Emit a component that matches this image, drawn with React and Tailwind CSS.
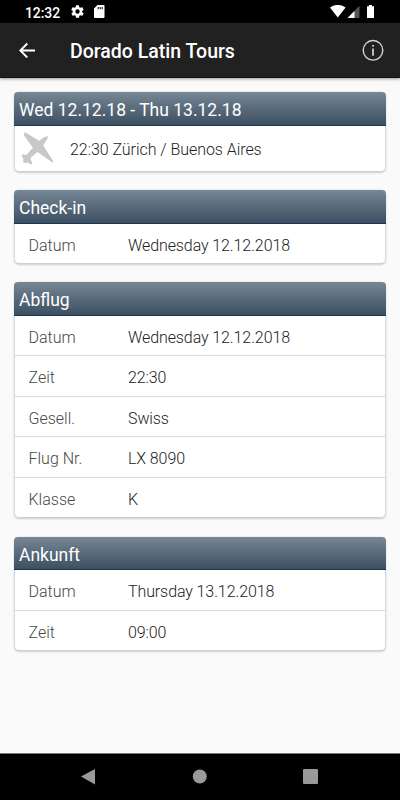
const rowText = "text-[16px] leading-none font-light whitespace-nowrap";

function Header({ children }) {
  return (
    <div className="-mx-px flex h-[33.5px] items-center rounded-t border-b border-[#173550] bg-linear-to-b from-[#778796] to-[#3c5061] px-[5px] text-[17.5px] leading-none text-white">
      <span className="pt-[5px]">{children}</span>
    </div>
  );
}

function Card({ title, rows, children, className = "" }) {
  return (
    <section className={`mx-[15px] rounded bg-white shadow-[0_1px_2px_1px_rgba(0,0,0,0.18)] ${className}`}>
      <Header>{title}</Header>
      {children}
      {rows && (
        <div className="divide-y divide-[#dadada]">
          {rows.map(([label, value]) => (
            <div key={label} className={`flex h-[40.5px] items-center pt-[5px] pl-[13.5px] last:h-[39.5px] ${rowText}`}>
              <span className="w-[99.5px] text-[#484848]">{label}</span>
              <span className="tracking-[-0.1px] text-[#222]">{value}</span>
            </div>
          ))}
        </div>
      )}
    </section>
  );
}

export default function App() {
  return (
    <div className="flex h-[800px] w-[400px] flex-col overflow-hidden bg-[#fafafa] font-['Roboto',sans-serif]">
      <div className="flex h-[23px] shrink-0 items-center bg-black text-white">
        <span className="ml-[25px] w-[45px] pt-0.5 text-[14px] leading-none font-medium tracking-[-0.1px]">12:32</span>
        <svg className="h-[15px] w-[15px]" viewBox="0 0 24 24" fill="currentColor">
          <path d="M19.4 13a7.8 7.8 0 0 0 0-2l2.1-1.6a.5.5 0 0 0 .1-.6l-2-3.5a.5.5 0 0 0-.6-.2l-2.5 1a7.3 7.3 0 0 0-1.7-1l-.4-2.6a.5.5 0 0 0-.5-.4h-4a.5.5 0 0 0-.5.4L9 5.1a7.3 7.3 0 0 0-1.7 1l-2.5-1a.5.5 0 0 0-.6.2l-2 3.5a.5.5 0 0 0 .1.6L4.5 11a7.8 7.8 0 0 0 0 2l-2.1 1.6a.5.5 0 0 0-.1.6l2 3.5a.5.5 0 0 0 .6.2l2.5-1a7.3 7.3 0 0 0 1.7 1l.4 2.6a.5.5 0 0 0 .5.4h4a.5.5 0 0 0 .5-.4l.4-2.6a7.3 7.3 0 0 0 1.7-1l2.5 1a.5.5 0 0 0 .6-.2l2-3.5a.5.5 0 0 0-.1-.6zM12 15.5a3.5 3.5 0 1 1 0-7 3.5 3.5 0 0 1 0 7z" />
        </svg>
        <svg className="ml-[9px] h-[13px] w-[10.5px]" viewBox="0 0 10.5 13" fill="currentColor">
          <path fillRule="evenodd" d="M3.5 0H9.5a1 1 0 0 1 1 1V12a1 1 0 0 1-1 1H1a1 1 0 0 1-1-1V3.5zM3.7 2v2.3h1V2zm2 0v2.3h1V2zm2 0v2.3h1V2z" />
        </svg>
        <svg className="ml-[225.5px] h-[13px] w-[46px]" viewBox="0 0 46 13" fill="currentColor">
          <path d="M0 2.6Q7.8-2.8 15.6 2.6L7.8 12.5z" />
          <path fill="#555" d="M29.5 .8V13H17.5z" />
          <path d="M24.5 6V13H17.5z" />
          <path d="M37 1.3h2V0h3v1.3h2V13h-7z" />
        </svg>
      </div>
      <header className="relative z-10 flex h-[54.5px] shrink-0 items-center border-b border-[#111] bg-[#212121] text-white shadow-[0_1px_3px_rgba(0,0,0,0.4)]">
        <svg className="ml-[19px] h-4 w-4" viewBox="0 0 16 16" fill="none" stroke="currentColor" strokeWidth="1.9">
          <path d="M16 8.5H1.5M8.3 1.5L1.3 8.500l7 7" />
        </svg>
        <h1 className="ml-[35px] pt-1 text-[19.5px] leading-none font-medium whitespace-nowrap">Dorado Latin Tours</h1>
        <svg className="mr-[16.5px] ml-auto h-[22px] w-[22px]" viewBox="0 0 22 22" fill="none" stroke="#d5d5d5">
          <circle cx="11" cy="11.3" r="9.8" strokeWidth="1.4" />
          <path d="M11 9.5v7.2M11 6v1.7" strokeWidth="1.7" />
        </svg>
      </header>
      <main className="flex-1">
        <Card title="Wed 12.12.18 - Thu 13.12.18" className="mt-[14.5px]">
          <div className={`flex h-[45.5px] items-center text-[#222] ${rowText}`}>
            <svg className="ml-1.5 h-[33px] w-[33px]" viewBox="0 0 33 33" fill="#c8c8c8">
              <path d="M3.2.7q1.300-.5 3 .7L18 8.800l4.200-3.100q3-1.900 4.600-1.500.6 1.400-1.500 4.300L22.200 13.500l10 15.500q.3 1.500-.8 1.500L16.500 20 10 25.500l-.5 2.300 1.800 2.800q.2 1.700-.9 1.900L6.300 30.500l-2.300.5-2-.5.5-3.300L.7 24q-.3-1.700 1.300-1.700l3.200.6L12 15.700 3 3.500Q2.300 1.500 3.200.7z" />
            </svg>
            <span className="ml-4 pt-[4px] tracking-[-0.05px]">22:30 Zürich / Buenos Aires</span>
          </div>
        </Card>
        <Card title="Check-in" className="mt-[19px]" rows={[["Datum", "Wednesday 12.12.2018"]]} />
        <Card title="Abflug" className="mt-[19px]" rows={[["Datum", "Wednesday 12.12.2018"], ["Zeit", "22:30"], ["Gesell.", "Swiss"], ["Flug Nr.", "LX 8090"], ["Klasse", "K"]]} />
        <Card title="Ankunft" className="mt-[19.5px]" rows={[["Datum", "Thursday 13.12.2018"], ["Zeit", "09:00"]]} />
      </main>
      <nav className="h-[47px] shrink-0 border-t border-[#777] bg-black">
        <svg className="h-[46px] w-[400px]" viewBox="0 0 400 46" fill="#999">
          <path d="M81 22.5L95 15v15.500z" />
          <circle cx="199.8" cy="22.500" r="7" />
          <rect x="303" y="15" width="15" height="15" rx="1" />
        </svg>
      </nav>
    </div>
  );
}
